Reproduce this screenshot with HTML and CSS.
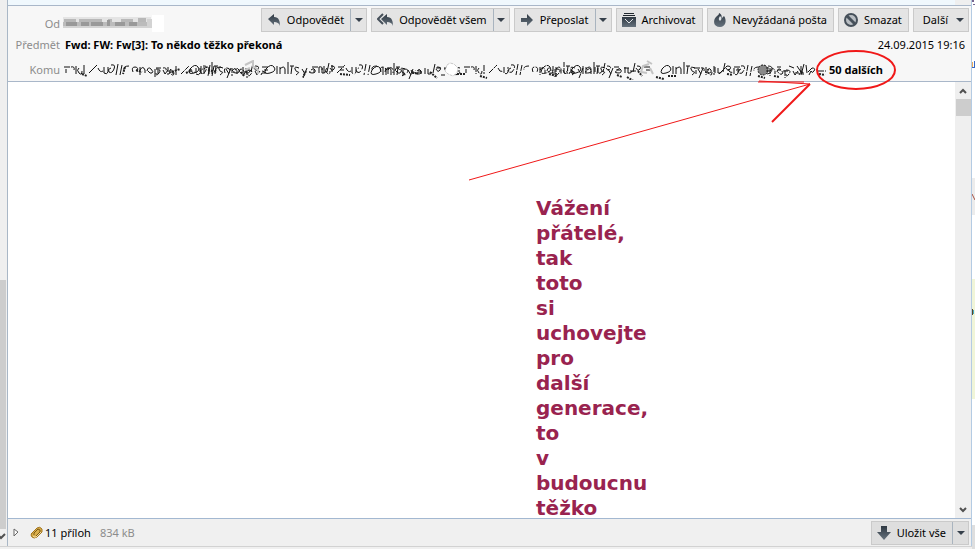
FILE: index.html
```html
<!DOCTYPE html>
<html lang="cs">
<head>
<meta charset="utf-8">
<title>Fwd: FW: Fw[3]: To někdo těžko překoná</title>
<link rel="stylesheet" href="styles.css">
</head>
<body>
<div class="window">
  <aside class="left-edge"><div class="left-thumb"></div><svg class="left-arrow" width="6" height="16" viewBox="0 0 6 16"><path d="M-3 5l4 4 4-4" fill="none" stroke="#505050" stroke-width="2"/></svg></aside>
  <main class="pane">
    <div class="list-strip"><div class="list-scroll"></div></div>
    <header class="header">
      <div class="row row-from">
        <span class="label">Od</span>
        <svg class="sender" width="102" height="18" viewBox="0 0 102 18">
          <path fill="#fff" d="M90 1h12v17H90z"/>
          <path fill="#e4e4e4" d="M1 3h88v11H1z"/>
          <path fill="#b8b8b8" d="M2 5h12v3H2zm15 0h23v3H17zm29 0h4v3h-4zm13 0h12v3H59zm17-1h8v4h-8z"/>
          <path fill="#999" d="M4 8h11v4H4zm15 0h8v4h-8zm10 0h12v4H29zm16-2h3v6h-3zm8 2h10v4H53zm14 0h8v4h-8z"/>
          <path fill="#bcbcbc" d="M1 8h3v4H1zm14 0h4v4h-4zm12 0h2v4h-2zm14 0h4v4h-4zm7 0h5v4h-5zm15 0h4v4h-4zm12 0h10v4H75z"/>
          <path fill="#d3d3d3" d="M1 12h86v2H1zm84-7h5v9h-5z"/>
        </svg>
        <div class="toolbar">
          <div class="split">
            <button class="btn"><svg width="14" height="14" viewBox="0 0 14 14"><defs><linearGradient id="steel" x2="0" y2="1"><stop stop-color="#2f3943"/><stop offset="1" stop-color="#66727d"/></linearGradient></defs><path fill="url(#steel)" d="M1 6l6-5v3c5 0 6 4 6 9-1-3-3-4-6-4v3z"/></svg>Odpovědět</button>
            <button class="drop" aria-label="Možnosti odpovědi"><svg width="8" height="4" viewBox="0 0 8 4"><path d="M0 0h8L4 4z"/></svg></button>
          </div>
          <div class="split">
            <button class="btn"><svg width="16" height="14" viewBox="0 0 16 14"><path fill="url(#steel)" d="M4 6l6-5v3c5 0 6 4 6 9-1-3-3-4-6-4v3z"/><path d="M6 1L1 6l5 5" fill="none" stroke="#46505a" stroke-width="2"/></svg>Odpovědět všem</button>
            <button class="drop" aria-label="Možnosti odpovědi všem"><svg width="8" height="4" viewBox="0 0 8 4"><path d="M0 0h8L4 4z"/></svg></button>
          </div>
          <div class="split">
            <button class="btn"><svg width="14" height="14" viewBox="0 0 14 14"><path fill="url(#steel)" d="M1 5h6V1l6 6-6 6V9H1z"/></svg>Přeposlat</button>
            <button class="drop" aria-label="Možnosti přeposlání"><svg width="8" height="4" viewBox="0 0 8 4"><path d="M0 0h8L4 4z"/></svg></button>
          </div>
          <button class="btn single"><svg width="14" height="14" viewBox="0 0 14 14"><path fill="#20272e" d="M2 0h10v1H2zM1 2h12v1H1z"/><path fill="url(#steel)" d="M0 4h14v10H0z"/><path d="M3 6l4 4 4-4" fill="none" stroke="#e3e6e8"/></svg>Archivovat</button>
          <button class="btn single"><svg width="14" height="14" viewBox="0 0 14 14"><path fill="url(#steel)" d="M6 0c4 2 2 4 3 5l2-2c3 4 2 11-4 11C0 14 0 7 3 4c2-2 3-2 3-4z"/><path fill="#dfe3e6" d="M7 3c2 2 2 3 0 5-2-2-1-3 0-5z"/></svg>Nevyžádaná pošta</button>
          <button class="btn single"><svg width="14" height="14" viewBox="0 0 14 14"><circle cx="7" cy="7" r="6" fill="#b9bec3" stroke="#46505a" stroke-width="2"/><path d="M3 3l8 8" stroke="#46505a" stroke-width="3"/></svg>Smazat</button>
          <button class="btn single more">Další<svg width="8" height="4" viewBox="0 0 8 4"><path d="M0 0h8L4 4z"/></svg></button>
        </div>
      </div>
      <div class="row row-subject">
        <span class="label">Předmět</span>
        <strong class="subject">Fwd: FW: Fw[3]: To někdo těžko překoná</strong>
        <time class="date">24.09.2015 19:16</time>
      </div>
      <div class="row row-to">
        <span class="label">Komu</span>
        <svg class="recipients" width="762" height="20" viewBox="0 0 762 20">
          <!-- struck-out recipient names -->
          <defs>
            <path id="scrawl" d="M0 7h6m-4 2v4m5-6q4-1 3 3m2-4v8m3-6q-3 2 0 5t3-2m2-6v9m5-1q4-4 8-8m1 3q2 5 5 3m1-4v6q3 2 4-1V7m3-2q5-1 3 4t-5 3q-2-3 2-4m7-4-2 11m6-10-2 10m9-9q-6 0-5 4m9 2q-2-5 2-5t2 5m3-5v8m0-5q3-5 5 0v3m2-2q1-5 4-2t1 4-4-2m7-2v8m1-8q6 0 3 4t-3 0m7-3 2 4 3-4m2 0q4 0 3 4m-4 0q0-3 4-2"/>
            <path id="scrawl-alt" d="M0 9q5-6 8-2t-4 6-4-4m11-3v8m3-7v7m0-5q4-4 5 0v5m3-12v12m2-8h4m-2 0-1 8m8-6q-5-2-4 1t3 3-2 3m6-6 3 5m2-6-4 10m8-8q3-3 4 0t-3 3-2-2m9-4v6m3-5v5q3 1 4-2m3-8-2 9m4-6q5 0 3 3t-4-1m8-1h6m-4 3h4"/>
          </defs>
          <g fill="none" stroke="#111">
            <use href="#scrawl"/>
            <use href="#scrawl" x="92" y="1" stroke-dasharray="5 1"/>
            <use href="#scrawl-alt" x="126"/>
            <use href="#scrawl-alt" x="202"/>
            <use href="#scrawl" x="248" stroke-dasharray="7 2"/>
            <use href="#scrawl-alt" x="308" y="1"/>
            <path d="M372 8h5m0 7h4m4-6h-5m11-2 5 1m-7 3h7m-7 3q6 2 7-2"/>
            <use href="#scrawl" x="400" stroke-dasharray="6 1"/>
            <use href="#scrawl-alt" x="478" stroke-dasharray="5 1"/>
            <use href="#scrawl-alt" x="508"/>
            <path d="M560 8h5m1 3h6"/>
            <use href="#scrawl-alt" x="598"/>
            <use href="#scrawl" x="630" y="1" stroke-dasharray="6 1"/>
            <path d="M713 7h4m-3 3h3m2 1h5m1-5 5 2m1 5h4m-2-7 4 6m0-6v7m3-9-3 11m5-10 1 8m1-1 4-4m-1 3-2 4m3-7q4 0 2 3t-3 0m7 0h6m1 0h2m2 0h1"/>
          </g>
          <g fill="none" stroke="#222" stroke-width="2" stroke-dasharray="2 1">
            <path d="M18 14l5 2m38-9-2 7m13-4 6 2m30 0 8-3m6 4 6-3m16 0 9 2m24 0 3 4m5-7-5 5m62-3-3 6m37-3 10 1m62-3 6 2m12-2 7 6m20-4h8m15 2 7 2m62-4 8 2m60-1 5 2m5 0 8 5m3-11 4 5m14 1 8 2m4-3h9m50-2 6 1m25 1 7 2m9-2 5 1m40-3 6 1m40 0 3 3"/>
          </g>
          <g fill="none" stroke="#c4c4c4" stroke-width="2">
            <path d="M181 5l8-4v5l5 4v4m-8-6-5 2m404-6-6 2-2 6 6 1m0-12 5 3m-2 4 3 6"/>
          </g>
          <path d="M383 5l3-2 4 1 4 4-1 5-4 3-5-2-3-3z" fill="#fff" stroke="#c8c8c8" stroke-dasharray="3 1"/>
          <circle cx="699" cy="10" r="5" fill="#888" stroke="#111" stroke-dasharray="2 1"/>
          <path d="M704 6q5 0 4 4t-5 4m-1-6h3m-3 3h4" fill="none" stroke="#222"/>
        </svg>
        <strong class="others">50 dalších</strong>
      </div>
    </header>
    <section class="message">
      <article class="body-text"><p>Vážení přátelé, tak toto si uchovejte pro další generace, to v budoucnu těžko</p></article>
      <div class="scrollbar">
        <svg width="8" height="6" viewBox="0 0 8 6"><path d="M1 5l3-3 3 3" fill="none" stroke="#505050" stroke-width="2"/></svg>
        <div class="thumb"></div>
        <svg class="down" width="8" height="6" viewBox="0 0 8 6"><path d="M1 1l3 3 3-3" fill="none" stroke="#505050" stroke-width="2"/></svg>
      </div>
    </section>
    <footer class="attachments">
      <svg class="twisty" width="6" height="9" viewBox="0 0 6 9"><path d="M1 1l4 3-4 4z" fill="#fff" stroke="#666"/></svg>
      <svg class="clip" width="13" height="13" viewBox="0 0 13 13"><path d="M1 8l6-6q3-2 5 1v3l-5 5q-3 2-5 0-2-2 0-4z" fill="#d9ae4c" stroke="#a27620"/><path d="M4 9V7l4-4 2 1v2L6 10" fill="none" stroke="#7d5a12"/><path d="M3 10l1 1h2l5-5" fill="none" stroke="#f0dca4"/></svg>
      <span class="count">11 příloh</span><span class="size">834 kB</span>
      <div class="split save">
        <button class="btn"><svg width="14" height="14" viewBox="0 0 14 14"><path fill="url(#steel)" d="M4 0h6v6h4l-7 8-7-8h4z"/></svg>Uložit vše</button>
        <button class="drop" aria-label="Možnosti uložení"><svg width="8" height="4" viewBox="0 0 8 4"><path d="M0 0h8L4 4z"/></svg></button>
      </div>
    </footer>
    <svg class="annotation" width="430" height="140" viewBox="0 0 430 140" fill="none" stroke="#f01818">
      <ellipse cx="387" cy="22" rx="39" ry="19" stroke-width="2"/>
      <path d="M0 132L341 36"/>
      <path d="M290 33l51 3M289 34l46 0"/><path d="M341 36L303 74" stroke-width="2"/>
    </svg>
  </main>
  <aside class="right-edge">
    <svg width="3" height="178" viewBox="0 0 3 178"><path fill="#77658f" d="M0 0h2v2H0zm1 4h2v1H1z"/><path fill="#3768c4" d="M2 61h1v7H0v-1h2z"/><path fill="#e8a95a" d="M0 62h1v5H0z"/></svg>
    <div class="edge-grey"><svg width="3" height="30" viewBox="0 0 3 30"><path d="M0 16l3 6" stroke="#a65345"/></svg></div>
    <div class="edge-yellow"><svg width="3" height="40" viewBox="0 0 3 40"><path fill="#5a4a24" d="M0 30h1v6H0z"/><path fill="#48a9c4" d="M1 31h1v4H1z"/></svg></div>
    <div class="edge-foot"></div>
  </aside>
  <div class="status"></div>
</div>
</body>
</html>
```
FILE: styles.css
```css
* { box-sizing: border-box; }
body { margin: 0; font: 11px/16px "Noto Sans", "Open Sans", sans-serif; color: #000; background: #fff; }
svg { display: block; flex: none; }
.window { display: grid; grid-template-columns: 7px minmax(0, 1fr) 3px; grid-template-rows: minmax(0, 1fr) 3px; height: 100vh; overflow: hidden; }
.left-edge { background: #efefef; display: flex; flex-direction: column; }
.left-thumb { flex: none; width: 6px; height: 249px; margin-top: 280px; background: #cdcdcd; }
.pane { position: relative; display: flex; flex-direction: column; min-width: 0; border-left: 1px solid #a9b7c6; border-right: 1px solid #b4cbe3; }
.list-strip { flex: none; height: 6px; background: #f0f8fd; border-bottom: 1px solid #a9b7c9; }
.list-scroll { width: 16px; height: 5px; margin-left: auto; background: #efefef; }
.header { flex: none; height: 76px; padding-top: 2px; background: #f7f7f7; border-bottom: 1px solid #a9b7c9; }
.row { display: flex; align-items: center; }
.row-from { height: 24px; align-items: flex-end; }
.row-subject { height: 26px; }
.row-to { height: 23px; }
.label { flex: none; width: 52px; text-align: right; color: #8c8c8c; }
.sender { margin-left: 2px; }
.subject { margin-left: 5px; }
.date { margin-left: auto; padding-right: 6px; }
.recipients { margin-left: 4px; }
.others { margin-left: 3px; white-space: nowrap; }
.toolbar { display: flex; gap: 4px; margin-left: auto; padding-right: 2px; }
.split { display: flex; height: 24px; background: #e4e4e4; border: 1px solid #cacaca; }
button { font: inherit; color: #000; border: 0; background: none; padding: 0; margin: 0; white-space: nowrap; }
.btn { display: flex; align-items: center; gap: 6px; padding: 0 6px 0 5px; }
.single { height: 24px; background: #e4e4e4; border: 1px solid #cacaca; }
.drop { display: flex; align-items: center; justify-content: center; width: 16px; border-left: 1px solid #a9b4bf; }
.drop svg, .more svg { fill: #36404b; }
.more { padding: 0 4px 0 9px; gap: 8px; }
.message { flex: 1; min-height: 0; display: flex; background: #fff; overflow: hidden; }
.body-text { flex: 1; padding: 114px 0 0 528px; }
/* zero width puts every word on a line of its own */
.body-text p { width: 0; margin: 0; color: #99234f; font: bold 20px/25px "DejaVu Sans", Verdana, sans-serif; }
.scrollbar { flex: none; display: flex; flex-direction: column; align-items: center; width: 16px; padding: 6px 0 5px; background: #efefef; }
.thumb { width: 15px; height: 17px; margin-top: 5px; background: #cdcdcd; }
.down { margin-top: auto; }
.attachments { flex: none; display: flex; align-items: center; height: 28px; padding: 0 2px 0 5px; background: #f0f0f0; border-top: 1px solid #a3b8d1; }
.twisty { margin-right: 11px; }
.clip { margin-right: 2px; }
.size { margin-left: 9px; color: #8c8c8c; }
.save { margin-left: auto; background: #dedede; }
.status { grid-column: 1 / 3; background: #f0f0f0; border-top: 1px solid #d2d2d2; }
.annotation { position: absolute; left: 461px; top: 48px; }
.right-edge { grid-row: 1 / 3; grid-column: 3; display: flex; flex-direction: column; background: #fff; }
.edge-grey { flex: none; height: 37px; background: #ececec; }
.edge-yellow { flex: none; height: 120px; margin-top: 64px; background: #f0f5d8; }
.edge-foot { flex: 1; margin-top: 126px; background: #dedede; }
```
